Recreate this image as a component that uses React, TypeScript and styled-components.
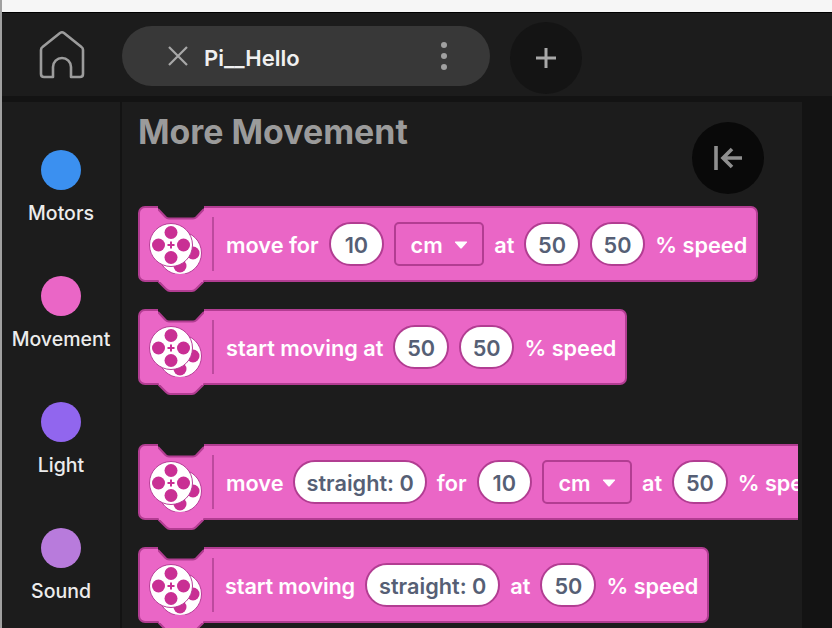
import { Fragment } from "react";
import styled, { createGlobalStyle } from "styled-components";

const GlobalStyle = createGlobalStyle`
  html, body {
    margin: 0;
    padding: 0;
    width: 832px;
    height: 628px;
    overflow: hidden;
    background: #131313;
    font-family: Inter, "Liberation Sans", sans-serif;
  }
`;

const Page = styled.div`
  width: 832px;
  height: 628px;
  display: flex;
  flex-direction: column;
  overflow: hidden;
  background: #131313;
  border-left: 2px solid #a0a0a0;
  box-sizing: border-box;
`;

const TopStrip = styled.div`
  height: 13px;
  flex: none;
  box-sizing: border-box;
  background: #f6f6f6;
  border-bottom: 1px solid #000;
`;

const Header = styled.header`
  height: 83px;
  flex: none;
  background: #1c1c1c;
  display: flex;
  align-items: center;
  gap: 20px;
`;

const HomeButton = styled.div`
  width: 100px;
  margin-left: 20px;
  margin-right: -20px;
  display: flex;
  color: #9c9c9c;
  box-sizing: border-box;
  padding-left: 17px;
`;

const TabPill = styled.div`
  width: 368px;
  height: 60px;
  margin-top: 3px;
  border-radius: 30px;
  background: #383838;
  display: flex;
  align-items: center;
  padding: 0 43px 0 46px;
  box-sizing: border-box;
  color: #f0f0f0;
  font-size: 22px;
  font-weight: 600;
`;

const TabName = styled.span`
  margin-left: 16px;
  padding-top: 3px;
  flex: 1;
`;

const Dots = styled.div`
  display: flex;
  flex-direction: column;
  gap: 5px;
  span {
    width: 6px;
    height: 6px;
    border-radius: 50%;
    background: #a0a0a0;
  }
`;

const RoundButton = styled.div<{ $bg: string }>`
  width: 72px;
  height: 72px;
  border-radius: 50%;
  background: ${(p) => p.$bg};
  display: flex;
  align-items: center;
  justify-content: center;
  color: #a0a0a0;
`;

const AddButton = styled(RoundButton)`
  margin-top: 7px;
`;

const Body = styled.div`
  flex: 1;
  min-height: 0;
  margin-top: 6px;
  display: flex;
`;

const Sidebar = styled.nav`
  width: 118px;
  flex: none;
  background: #1c1c1c;
  padding-top: 48px;
  display: flex;
  flex-direction: column;
  gap: 126px;
  box-sizing: border-box;
`;

const Category = styled.div`
  height: 0;
  display: flex;
  flex-direction: column;
  align-items: center;
  gap: 12px;
`;

const Dot = styled.div<{ $color: string }>`
  width: 40px;
  height: 40px;
  flex: none;
  border-radius: 50%;
  background: ${(p) => p.$color};
`;

const CategoryLabel = styled.div`
  flex: none;
  font-size: 19.5px;
  line-height: 22px;
  font-weight: 450;
  color: #ececec;
  white-space: nowrap;
`;

const Panel = styled.main`
  position: relative;
  width: 680px;
  margin-left: 2px;
  flex: none;
  background: #1c1c1c;
  padding: 0 4px 0 16px;
  box-sizing: border-box;
  overflow: hidden;
`;

const PanelTitle = styled.h2`
  margin: 11px 0 0;
  height: 38px;
  font-size: 33.9px;
  line-height: 38px;
  font-weight: 700;
  color: #9b9b9b;
`;

const Collapse = styled(RoundButton)`
  position: absolute;
  top: 20px;
  left: 570px;
`;

const BlockList = styled.div`
  overflow: hidden;
  height: 100%;
`;

const Group = styled.div<{ $top: number }>`
  margin-top: ${(p) => p.$top}px;
  display: flex;
  flex-direction: column;
  align-items: flex-start;
  gap: 27px;
`;

const Block = styled.div`
  position: relative;
  flex: none;
  height: 76px;
  box-sizing: border-box;
  display: flex;
  align-items: center;
  gap: 10px;
  padding: 0 9px 0 0;
  background: #ea66c6;
  border: 2px solid #b23d92;
  border-radius: 7px;
  white-space: nowrap;
  color: #fff;
  font-size: 21.7px;
  font-weight: 600;
`;

const Label = styled.span<{ $tight?: boolean }>`
  padding-top: 2px;
  letter-spacing: ${(p) => (p.$tight ? "-0.15px" : "normal")};
`;

const Notch = styled.svg`
  position: absolute;
  left: 18px;
  top: -2px;
`;

const Tab = styled.svg`
  position: absolute;
  left: 18px;
  top: 72px;
`;

const IconSlot = styled.div<{ $tight?: boolean }>`
  width: 74px;
  height: 54px;
  margin-right: ${(p) => (p.$tight ? 1 : 2)}px;
  flex: none;
  box-sizing: border-box;
  border-right: 2px solid #bd4a9e;
  display: flex;
  align-items: center;
  padding-left: 8px;
`;

const Pill = styled.div<{ $pad: number }>`
  height: 44px;
  min-width: 55.5px;
  padding: 2px ${(p) => p.$pad}px 0;
  box-sizing: border-box;
  display: flex;
  align-items: center;
  justify-content: center;
  border: 2px solid #b23d92;
  border-radius: 22px;
  background: #fff;
  color: #565f75;
  font-size: 21.7px;
  font-weight: 600;
`;

const Select = styled.div`
  width: 90px;
  height: 44px;
  padding-top: 2px;
  box-sizing: border-box;
  display: flex;
  align-items: center;
  justify-content: center;
  gap: 11px;
  border: 2px solid #b23d92;
  border-radius: 5px;
`;

const WheelIcon = () => (
  <svg width="56" height="60" viewBox="0 0 56 60">
    <circle cx="32" cy="39" r="21.500" fill="#fff" stroke="#b83d98" strokeWidth="1" />
    <circle cx="45" cy="39" r="6.500" fill="#c92f94" />
    <circle cx="32" cy="52" r="6.500" fill="#c92f94" />
    <circle cx="23" cy="31" r="21.500" fill="#fff" stroke="#b83d98" strokeWidth="1" />
    <circle cx="23" cy="18.500" r="6.500" fill="#c92f94" />
    <circle cx="10.500" cy="31" r="6.500" fill="#c92f94" />
    <circle cx="35.500" cy="31" r="6.500" fill="#c92f94" />
    <circle cx="23" cy="43.500" r="6.500" fill="#c92f94" />
    <path d="M23 27.500v7M19.500 31h7" stroke="#c92f94" strokeWidth="2" />
  </svg>
);

const BlockShape = ({ tight }: { tight?: boolean }) => (
  <>
    <Notch width="46" height="14" viewBox="0 0 46 14">
      <path d="M0 0v3l7.500 8q1.500 1.500 3.500 1.500h24q2 0 3.500-1.500L46 3V0z" fill="#1c1c1c" />
      <path d="M0 3l7.500 8q1.500 1.500 3.500 1.500h24q2 0 3.500-1.500L46 3" fill="none" stroke="#b23d92" strokeWidth="2" />
    </Notch>
    <Tab width="46" height="14" viewBox="0 0 46 14">
      <path d="M0 0l8 9q2 2 4 2h22q2 0 4-2l8-9z" fill="#ea66c6" />
      <path d="M0 1l8 8q2 2 4 2h22q2 0 4-2l8-8" fill="none" stroke="#b23d92" strokeWidth="2" />
      <path d="M1 0h44v2H1z" fill="#ea66c6" />
    </Tab>
    <IconSlot $tight={tight}>
      <WheelIcon />
    </IconSlot>
  </>
);

const Caret = () => (
  <svg width="14" height="8" viewBox="0 0 14 8">
    <path d="M1.500 0.500h11q1 0 .4 1L8 7q-1 1-2 0L1.100 1.500q-.6-1 .4-1z" fill="#fff" />
  </svg>
);

type Part = { t: "text" | "pill" | "select"; v: string };

const blocks: { tight?: boolean; parts: Part[] }[][] = [
  [
    {
      parts: [
        { t: "text", v: "move for" },
        { t: "pill", v: "10" },
        { t: "select", v: "cm" },
        { t: "text", v: "at" },
        { t: "pill", v: "50" },
        { t: "pill", v: "50" },
        { t: "text", v: "% speed" },
      ],
    },
    {
      parts: [
        { t: "text", v: "start moving at" },
        { t: "pill", v: "50" },
        { t: "pill", v: "50" },
        { t: "text", v: "% speed" },
      ],
    },
  ],
  [
    {
      parts: [
        { t: "text", v: "move" },
        { t: "pill", v: "straight: 0" },
        { t: "text", v: "for" },
        { t: "pill", v: "10" },
        { t: "select", v: "cm" },
        { t: "text", v: "at" },
        { t: "pill", v: "50" },
        { t: "text", v: "% speed" },
      ],
    },
    {
      tight: true,
      parts: [
        { t: "text", v: "start moving" },
        { t: "pill", v: "straight: 0" },
        { t: "text", v: "at" },
        { t: "pill", v: "50" },
        { t: "text", v: "% speed" },
      ],
    },
  ],
];

const categories = [
  { label: "Motors", color: "#3b90f0" },
  { label: "Movement", color: "#ea66c6" },
  { label: "Light", color: "#9166ee" },
  { label: "Sound", color: "#b87bdc" },
];

export default function App() {
  return (
    <Page>
      <GlobalStyle />
      <TopStrip />
      <Header>
        <HomeButton>
          <svg width="46" height="50" viewBox="0 0 46 50" fill="none" stroke="currentColor" strokeWidth="2.600" strokeLinejoin="round">
            <path d="M5 47h9V37a9 9 0 0 1 18 0v10h9q3 0 3-3V20q0-2-1.500-3L25 3q-2-1.500-4 0L3.500 17Q2 18 2 20v24q0 3 3 3z" />
          </svg>
        </HomeButton>
        <TabPill>
          <svg width="20" height="20" viewBox="0 0 20 20" stroke="#a8a8a8" strokeWidth="2.200">
            <path d="M1 1l18 18M19 1L1 19" />
          </svg>
          <TabName>Pi__Hello</TabName>
          <Dots>
            <span />
            <span />
            <span />
          </Dots>
        </TabPill>
        <AddButton $bg="#141414">
          <svg width="20" height="20" viewBox="0 0 20 20" fill="#a8a8a8">
            <path d="M8.500 0h3v8.500H20v3h-8.500V20h-3v-8.500H0v-3h8.500z" />
          </svg>
        </AddButton>
      </Header>
      <Body>
        <Sidebar>
          {categories.map((c) => (
            <Category key={c.label}>
              <Dot $color={c.color} />
              <CategoryLabel>{c.label}</CategoryLabel>
            </Category>
          ))}
        </Sidebar>
        <Panel>
          <PanelTitle>More Movement</PanelTitle>
          <Collapse $bg="#090909">
            <svg width="28" height="26" viewBox="0 0 28 26" fill="none" stroke="#8f8f8f" strokeWidth="3.600">
              <path d="M2 1v24" />
              <path d="M28 13H10M18 4l-9 9 9 9" />
            </svg>
          </Collapse>
          <BlockList>
            {blocks.map((group, i) => (
              <Group key={i} $top={i === 0 ? 55 : 59}>
                {group.map((b, j) => (
                  <Block key={j}>
                    <BlockShape tight={b.tight} />
                    {b.parts.map((p, k) => (
                      <Fragment key={k}>
                        {p.t === "text" && <Label $tight={b.tight && k === 0}>{p.v}</Label>}
                        {p.t === "pill" && <Pill $pad={b.tight ? 12 : 11}>{p.v}</Pill>}
                        {p.t === "select" && (
                          <Select>
                            {p.v}
                            <Caret />
                          </Select>
                        )}
                      </Fragment>
                    ))}
                  </Block>
                ))}
              </Group>
            ))}
          </BlockList>
        </Panel>
      </Body>
    </Page>
  );
}
